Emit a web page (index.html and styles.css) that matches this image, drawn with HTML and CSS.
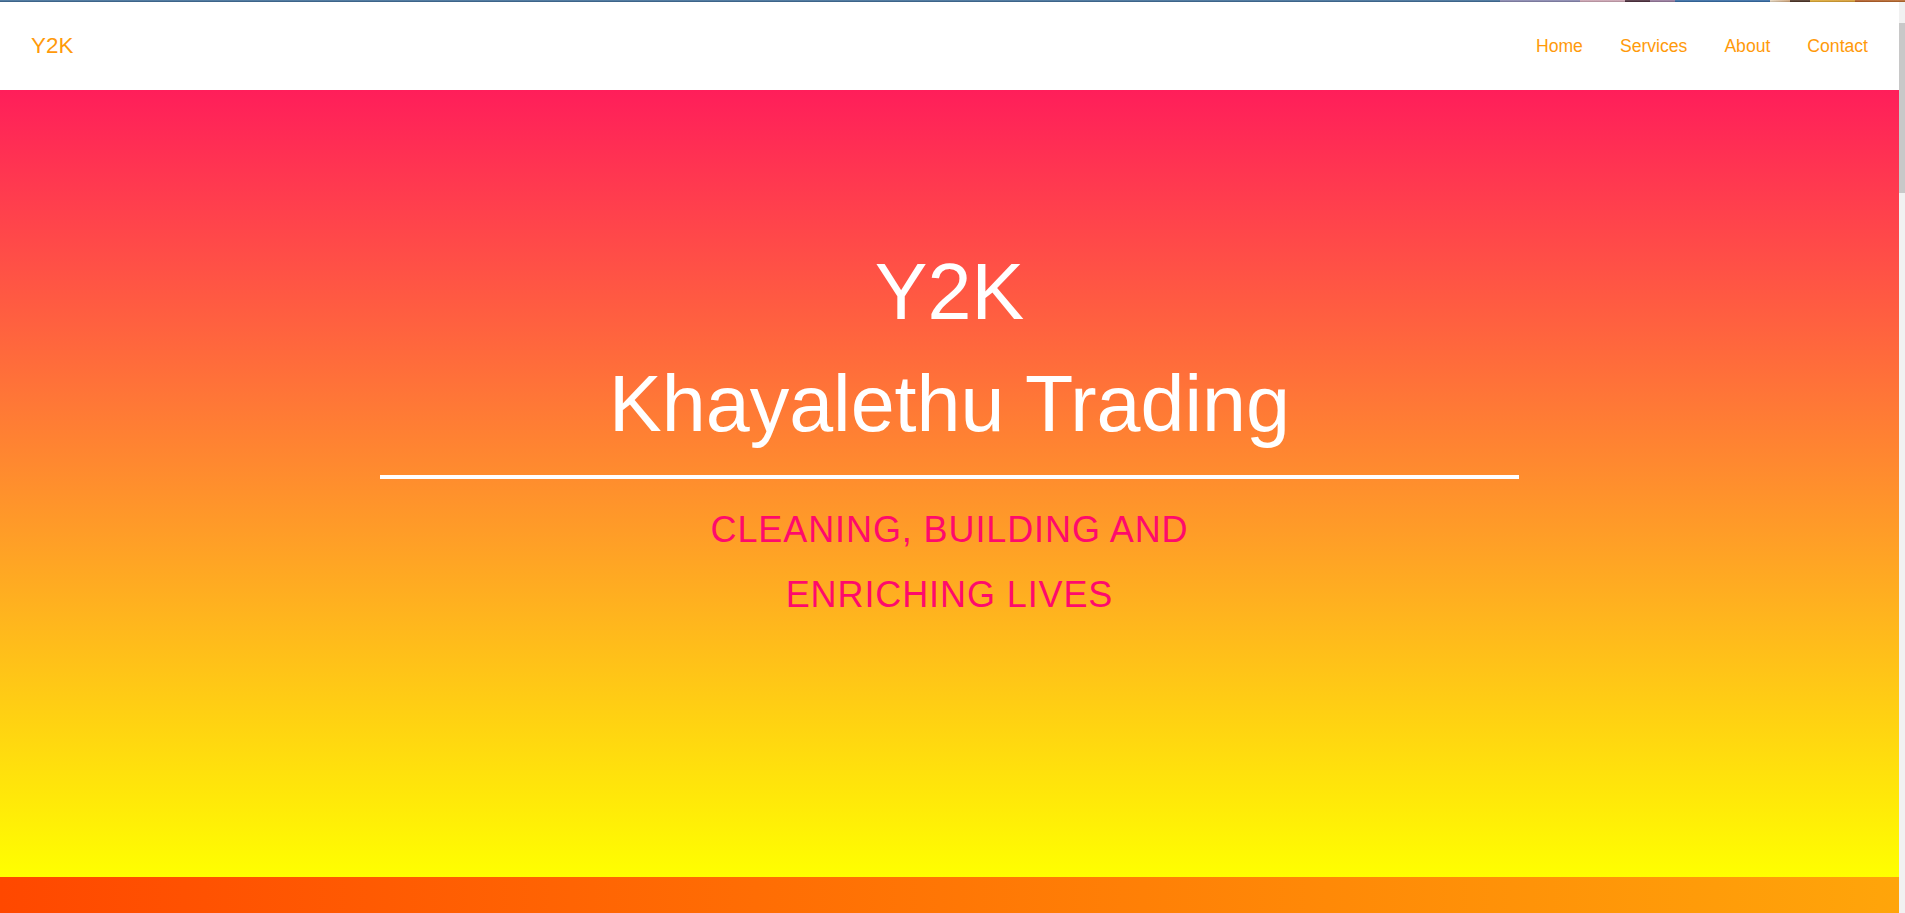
FILE: index.html
```html
<!DOCTYPE html>
<html lang="en">
<head>
<meta charset="utf-8">
<title>Y2K Khayalethu Trading</title>
<link rel="stylesheet" href="styles.css">
</head>
<body>
<div class="topstrip"></div>
<div class="window">
  <div class="page">
    <header class="site-header">
      <a class="brand" href="#">Y2K</a>
      <nav class="nav">
        <a href="#">Home</a>
        <a href="#">Services</a>
        <a href="#">About</a>
        <a href="#">Contact</a>
      </nav>
    </header>
    <section class="hero">
      <h1 class="hero-title">Y2K<br>Khayalethu Trading</h1>
      <div class="hero-rule"></div>
      <p class="hero-tagline">Cleaning, building and enriching lives</p>
    </section>
    <section class="band"></section>
  </div>
  <div class="scrollbar"><div class="scrollbar-thumb"></div></div>
</div>
</body>
</html>
```

FILE: styles.css
```css
* { box-sizing: border-box; }

html, body {
  margin: 0;
  padding: 0;
  height: 913px;
  overflow: hidden;
  background: #ffffff;
  font-family: "Liberation Sans", Arial, sans-serif;
}

.topstrip {
  height: 2px;
  background:
    linear-gradient(to bottom, rgba(255,255,255,0.18), rgba(0,0,0,0.2)),
    linear-gradient(to right,
      #3c6e9c 0, #3c6e9c 1500px,
      #8a88b4 1500px, #8a88b4 1580px,
      #d4a8b8 1580px, #d4a8b8 1625px,
      #4a2a3a 1625px, #4a2a3a 1650px,
      #9a7aa0 1650px, #9a7aa0 1675px,
      #2f6aa8 1675px, #2f6aa8 1770px,
      #f0e0c8 1770px, #d8a878 1790px,
      #4a3020 1790px, #4a3020 1810px,
      #e8b030 1810px, #e0a030 1855px,
      #b85a20 1855px, #c06a28 1905px);
}

.window {
  display: flex;
  height: 911px;
}

.page {
  flex: 1;
  min-width: 0;
  overflow: hidden;
}

.scrollbar {
  width: 6px;
  flex: none;
  background: #f1f1f1;
  padding-top: 21px;
}

.scrollbar-thumb {
  height: 170px;
  background: #c8c8c8;
}

/* Header */
.site-header {
  height: 88px;
  background: #ffffff;
  display: flex;
  align-items: center;
  justify-content: space-between;
  padding: 0 31px;
}

.brand {
  color: #ff9a0a;
  font-size: 22.4px;
  text-decoration: none;
}

.nav {
  display: flex;
  gap: 37px;
  padding-top: 1px;
}

.nav a {
  color: #ff9a0a;
  font-size: 17.6px;
  text-decoration: none;
}

/* Hero */
.hero {
  height: 787px;
  background: linear-gradient(to bottom, #ff1e5a 0%, #ffff00 100%);
  padding-top: 146px;
  text-align: center;
  display: flex;
  flex-direction: column;
  align-items: center;
}

.hero-title {
  margin: 0;
  color: #ffffff;
  font-size: 79px;
  font-weight: normal;
  line-height: 112px;
}

.hero-rule {
  width: 1139px;
  height: 4px;
  background: #ffffff;
  margin-top: 15px;
}

.hero-tagline {
  margin: 18px 0 0;
  max-width: 540px;
  color: #ff0a6c;
  font-size: 36px;
  letter-spacing: 0.9px;
  line-height: 65px;
  text-transform: uppercase;
}

.band {
  height: 400px;
  background: linear-gradient(to right, #ff4800 0%, #ffa50a 100%);
}
```
